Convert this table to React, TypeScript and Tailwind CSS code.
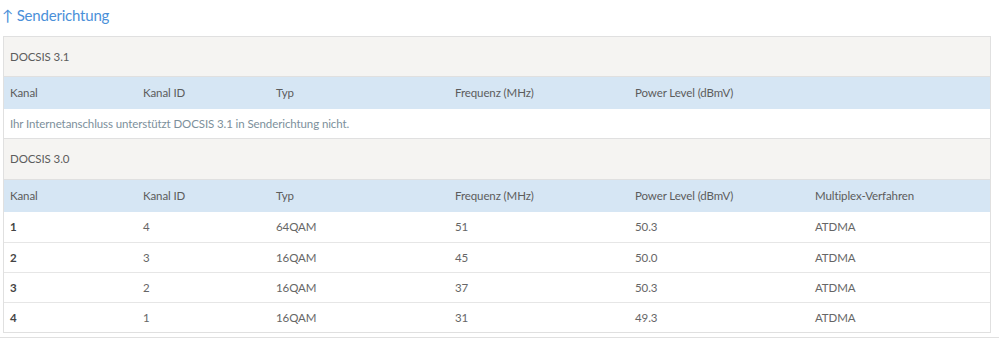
const rows = [
  { kanal: "1", id: "4", typ: "64QAM", freq: "51", power: "50.3", mux: "ATDMA" },
  { kanal: "2", id: "3", typ: "16QAM", freq: "45", power: "50.0", mux: "ATDMA" },
  { kanal: "3", id: "2", typ: "16QAM", freq: "37", power: "50.3", mux: "ATDMA" },
  { kanal: "4", id: "1", typ: "16QAM", freq: "31", power: "49.3", mux: "ATDMA" },
];

const cols = "grid grid-cols-[133px_133px_179px_180px_180px_1fr]";

const HeaderRow = ({ multiplex }: { multiplex: boolean }) => (
  <div className={`${cols} h-[32px] items-center bg-[#d6e6f4] text-[#5c5c5c]`}>
    <div className="pl-[6px]">Kanal</div>
    <div className="pl-[6px]">Kanal ID</div>
    <div className="pl-[6px]">Typ</div>
    <div className="pl-[6px]">Frequenz (MHz)</div>
    <div className="pl-[6px]">Power Level (dBmV)</div>
    <div className="pl-[6px]">{multiplex ? "Multiplex-Verfahren" : ""}</div>
  </div>
);

export default function App() {
  return (
    <div className="w-[999px] h-[341px] bg-white font-['Lato',sans-serif] text-[11.5px] tracking-[-0.1px]">
      <div className="pl-[2px] pt-[4px] h-[36px]">
        <a href="#" className="text-[15px] tracking-[-0.2px] text-[#4a90d9]">↑ Senderichtung</a>
      </div>
      <div className="ml-[3px] w-[988px] border border-[#e0e0e0]">
        <div className="h-[40px] flex items-center pl-[6px] bg-[#f5f4f2] text-[#5c5c5c] border-b border-[#e0e0e0]">
          DOCSIS 3.1
        </div>
        <HeaderRow multiplex={false} />
        <div className="h-[29px] flex items-center pl-[6px] text-[#7c8f9b]">
          Ihr Internetanschluss unterstützt DOCSIS 3.1 in Senderichtung nicht.
        </div>
        <div className="h-[42px] flex items-center pl-[6px] bg-[#f5f4f2] text-[#5c5c5c] border-y border-[#e0e0e0]">
          DOCSIS 3.0
        </div>
        <HeaderRow multiplex={true} />
        {rows.map((r, i) => (
          <div
            key={r.kanal}
            className={`${cols} h-[30px] items-center text-[#666] ${i > 0 ? "border-t border-[#e6e6e6]" : ""}`}
          >
            <div className="pl-[6px] font-bold text-[#444]">{r.kanal}</div>
            <div className="pl-[6px]">{r.id}</div>
            <div className="pl-[6px]">{r.typ}</div>
            <div className="pl-[6px]">{r.freq}</div>
            <div className="pl-[6px]">{r.power}</div>
            <div className="pl-[6px]">{r.mux}</div>
          </div>
        ))}
      </div>
      <div className="mt-[4px] border-t border-[#e0e0e0]" />
    </div>
  );
}
